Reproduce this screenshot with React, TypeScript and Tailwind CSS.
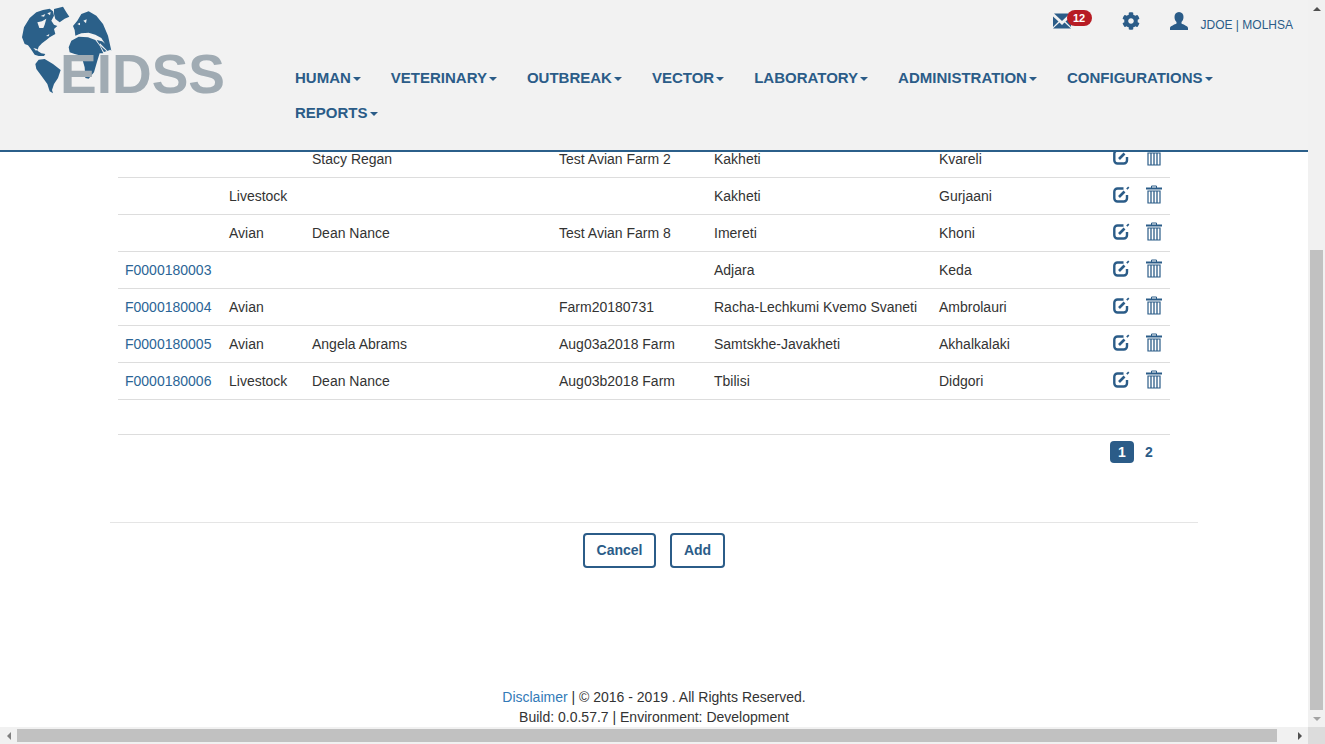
import { FaCog } from 'react-icons/fa'

const navItems = ['HUMAN', 'VETERINARY', 'OUTBREAK', 'VECTOR', 'LABORATORY', 'ADMINISTRATION', 'CONFIGURATIONS', 'REPORTS']

const farms = [
  { id: '', type: '', owner: 'Stacy Regan', name: 'Test Avian Farm 2', region: 'Kakheti', rayon: 'Kvareli' },
  { id: '', type: 'Livestock', owner: '', name: '', region: 'Kakheti', rayon: 'Gurjaani' },
  { id: '', type: 'Avian', owner: 'Dean Nance', name: 'Test Avian Farm 8', region: 'Imereti', rayon: 'Khoni' },
  { id: 'F0000180003', type: '', owner: '', name: '', region: 'Adjara', rayon: 'Keda' },
  { id: 'F0000180004', type: 'Avian', owner: '', name: 'Farm20180731', region: 'Racha-Lechkumi Kvemo Svaneti', rayon: 'Ambrolauri' },
  { id: 'F0000180005', type: 'Avian', owner: 'Angela Abrams', name: 'Aug03a2018 Farm', region: 'Samtskhe-Javakheti', rayon: 'Akhalkalaki' },
  { id: 'F0000180006', type: 'Livestock', owner: 'Dean Nance', name: 'Aug03b2018 Farm', region: 'Tbilisi', rayon: 'Didgori' },
]

function Logo() {
  return (
    <div className="relative w-[295px] h-[150px] shrink-0">
      <svg className="absolute left-[18px] top-[4px]" width="100" height="95" viewBox="0 0 300 285" fill="#2b6089">
        {/* north america */}
        <path d="M12 100 L18 70 L35 42 L55 25 L75 18 L95 14 L105 22 L108 35 L100 50 L108 62 L118 66 L108 75 L112 90 L95 100 L85 108 L72 118 L62 128 L58 140 L70 148 L82 150 L78 156 L62 156 L50 152 L38 134 L30 124 L20 120 Z" />
        {/* greenland */}
        <path d="M108 15 L135 8 L145 25 L154 38 L140 44 L125 55 L112 45 L108 30 Z" />
        {/* south america */}
        <path d="M52 180 L62 167 L80 165 L105 180 L128 198 L120 222 L108 240 L102 258 L105 268 L95 262 L88 240 L70 215 L55 195 Z" />
        {/* africa */}
        <path d="M152 130 L160 110 L182 98 L210 100 L232 108 L245 125 L256 148 L245 148 L238 170 L228 205 L212 224 L202 222 L200 190 L190 155 L170 150 L155 145 Z" />
        {/* eurasia */}
        <path d="M165 66 L178 50 L190 30 L212 22 L235 35 L255 60 L270 95 L280 140 L265 125 L250 102 L232 92 L212 86 L190 88 L172 95 L170 78 Z" />
        <path d="M236 108 L252 112 L274 128 L276 138 L258 144 L246 124 Z" />
        {/* lakes and sounds */}
        <g fill="#f2f2f2">
          <path d="M58 55 L72 52 L85 44 L80 62 L76 72 L64 72 Z" />
          <path d="M68 36 L82 30 L78 38 Z" />
          <path d="M88 28 L98 24 L96 34 Z" />
          <path d="M84 96 L94 90 L92 97 Z" />
          <path d="M46 132 L60 136 L54 140 Z" />
          <path d="M178 60 L186 56 L186 64 Z" />
          <path d="M196 50 L206 46 L204 58 Z" />
          <path d="M180 92 L204 90 L224 98 L204 96 Z" />
          <path d="M246 118 L268 140 L266 142 L244 122 Z" />
        </g>
      </svg>
      <div className="absolute left-[60px] top-[43px] text-[55px] leading-[63px] font-bold text-[#a0abb3]">EIDSS</div>
    </div>
  )
}

function MailIcon() {
  return (
    <svg width="18" height="16" viewBox="0 0 18 16" fill="#2b5c88">
      <path d="M0 3.500 L5.500 8.500 L0 14 Z" />
      <path d="M18 3.500 L12.500 8.500 L18 14 Z" />
      <path d="M0 15.500 L6.500 9.500 L9 12 L11.500 9.500 L18 15.500 Z" />
      <path d="M1 0.500 L17 0.500 L9 8 Z" />
    </svg>
  )
}

function UserIcon() {
  return (
    <svg width="18" height="18" viewBox="0 0 18 18" fill="#2b5c88">
      <path d="M9 0C6 0 4.500 2.200 4.500 5c0 2 .8 4 2 5v1.500C5 12.500 0 14 0 16v2h18v-2c0-2-5-3.500-6.500-4.500V10c1.200-1 2-3 2-5 0-2.800-1.500-5-4.500-5z" />
    </svg>
  )
}

function EditIcon() {
  return (
    <svg width="17" height="17" viewBox="0 0 17 17" fill="none" stroke="#2b5c88">
      <path d="M10.500 2.500H4.500A3.200 3.200 0 0 0 1.300 5.700v6.600a3.200 3.200 0 0 0 3.200 3.200h6.300a3.200 3.200 0 0 0 3.200-3.200V9" strokeWidth="2.400" />
      <path d="M6 11 L11.500 5.500" strokeWidth="2.600" />
      <path d="M13.800 3.200 L15.800 1.200" strokeWidth="1.700" />
    </svg>
  )
}

function TrashIcon() {
  return (
    <svg width="16" height="19" viewBox="0 0 16 19" fill="none" stroke="#2b5c88">
      <path d="M5.500 3V1h5v2" strokeWidth="1" />
      <path d="M0 3.500h16" strokeWidth="2" />
      <path d="M2 6h12v12H2z" strokeWidth="1.200" />
      <path d="M5 6v12M8 6v12M11 6v12" strokeWidth="1.300" />
    </svg>
  )
}

function Header() {
  return (
    <header className="flex h-[152px] shrink-0 bg-[#f2f2f2] border-b-2 border-[#2b5f8a]">
      <Logo />
      <div className="flex-1 min-w-0">
        <div className="h-[60px] flex justify-end pr-[15px] pt-[12px]">
          <div className="relative w-[39px] pt-[1px]">
            <MailIcon />
            <span className="absolute left-[14px] top-[-2px] w-[25px] h-[16px] rounded-full bg-[#b71c24] text-white text-[11px] leading-[16px] font-bold text-center">12</span>
          </div>
          <FaCog className="ml-[30px] text-[18px] text-[#2b5c88]" />
          <div className="ml-[30px]"><UserIcon /></div>
          <span className="ml-[13px] mt-[5px] text-[12px] leading-[16px] text-[#2b5c88]">JDOE | MOLHSA</span>
        </div>
        <nav className="flex flex-wrap gap-x-[30px] pr-[10px]">
          {navItems.map((item) => (
            <a key={item} className="flex items-center h-[35px] pt-[2px] text-[15px] font-bold text-[#2b5c88]">
              {item}
              <span className="ml-[2px] w-0 h-0 border-x-4 border-x-transparent border-t-4 border-t-[#2b5c88]" />
            </a>
          ))}
        </nav>
      </div>
    </header>
  )
}

function FarmTable() {
  return (
    <table className="w-[1052px] ml-[118px] -mt-[12px] table-fixed text-[14px] text-[#333]">
      <colgroup>
        <col className="w-[104px]" />
        <col className="w-[83px]" />
        <col className="w-[247px]" />
        <col className="w-[155px]" />
        <col className="w-[225px]" />
        <col className="w-[174px]" />
        <col className="w-[64px]" />
      </colgroup>
      <tbody>
        {farms.map((farm) => (
          <tr key={farm.rayon} className="h-[37px] border-b border-[#ddd]">
            <td className="px-[7px] pt-[2px] text-[#2b6596]">{farm.id}</td>
            <td className="px-[7px] pt-[2px]">{farm.type}</td>
            <td className="px-[7px] pt-[2px]">{farm.owner}</td>
            <td className="px-[7px] pt-[2px]">{farm.name}</td>
            <td className="px-[7px] pt-[2px] whitespace-nowrap">{farm.region}</td>
            <td className="px-[7px] pt-[2px]">{farm.rayon}</td>
            <td>
              <div className="flex items-center gap-[16px] pl-[7px] -mt-[3px]">
                <EditIcon />
                <TrashIcon />
              </div>
            </td>
          </tr>
        ))}
      </tbody>
    </table>
  )
}

export default function App() {
  return (
    <div className="flex flex-col w-[1325px] h-[744px] overflow-hidden bg-white font-['Liberation_Sans',Arial,sans-serif]">
      <div className="flex flex-1 min-h-0">
        <div className="flex flex-col flex-1 min-w-0">
          <Header />
          <main className="flex-1 min-h-0 overflow-hidden">
            <FarmTable />
            <div className="w-[1052px] ml-[118px] h-[35px] border-b border-[#ddd]" />
            <div className="w-[1052px] ml-[118px] flex justify-end gap-[3px] pr-[9px] pt-[6px] text-[14px] font-bold">
              <span className="w-[24px] h-[22px] rounded-[4px] bg-[#2b5c88] text-white text-center leading-[22px]">1</span>
              <span className="w-[24px] h-[22px] text-[#2b5c88] text-center leading-[22px]">2</span>
            </div>
            <div className="w-[1088px] mx-auto mt-[59px] border-t border-[#e5e5e5] flex justify-center gap-[14px] pt-[10px]">
              <button className="w-[73px] h-[35px] border-2 border-[#2b5c88] rounded-[4px] text-[14px] font-bold text-[#2b5c88]">Cancel</button>
              <button className="w-[55px] h-[35px] border-2 border-[#2b5c88] rounded-[4px] text-[14px] font-bold text-[#2b5c88]">Add</button>
            </div>
            <footer className="mt-[119px] text-center text-[14px] leading-[20px] text-[#333]">
              <div><a className="text-[#337ab7]">Disclaimer</a> | © 2016 - 2019 . All Rights Reserved.</div>
              <div>Build: 0.0.57.7 | Environment: Development</div>
            </footer>
          </main>
        </div>
        <div className="w-[17px] shrink-0 flex flex-col items-center bg-[#f1f1f1]">
          <div className="h-[17px] w-full flex items-center justify-center">
            <span className="w-0 h-0 border-x-[4px] border-x-transparent border-b-[4px] border-b-[#505050]" />
          </div>
          <div className="flex-1 w-full px-[2px] pt-[233px]">
            <div className="h-[460px] bg-[#c1c1c1]" />
          </div>
          <div className="h-[17px] w-full flex items-center justify-center">
            <span className="w-0 h-0 border-x-[4px] border-x-transparent border-t-[4px] border-t-[#a3a3a3]" />
          </div>
        </div>
      </div>
      <div className="h-[17px] shrink-0 flex bg-[#f1f1f1]">
        <div className="w-[17px] flex items-center justify-center">
          <span className="w-0 h-0 border-y-[4px] border-y-transparent border-r-[4px] border-r-[#808080]" />
        </div>
        <div className="flex-1 py-[2px]">
          <div className="w-[1260px] h-full bg-[#c1c1c1]" />
        </div>
        <div className="w-[17px] flex items-center justify-center">
          <span className="w-0 h-0 border-y-[4px] border-y-transparent border-l-[4px] border-l-[#505050]" />
        </div>
        <div className="w-[17px] bg-[#dcdcdc]" />
      </div>
    </div>
  )
}
